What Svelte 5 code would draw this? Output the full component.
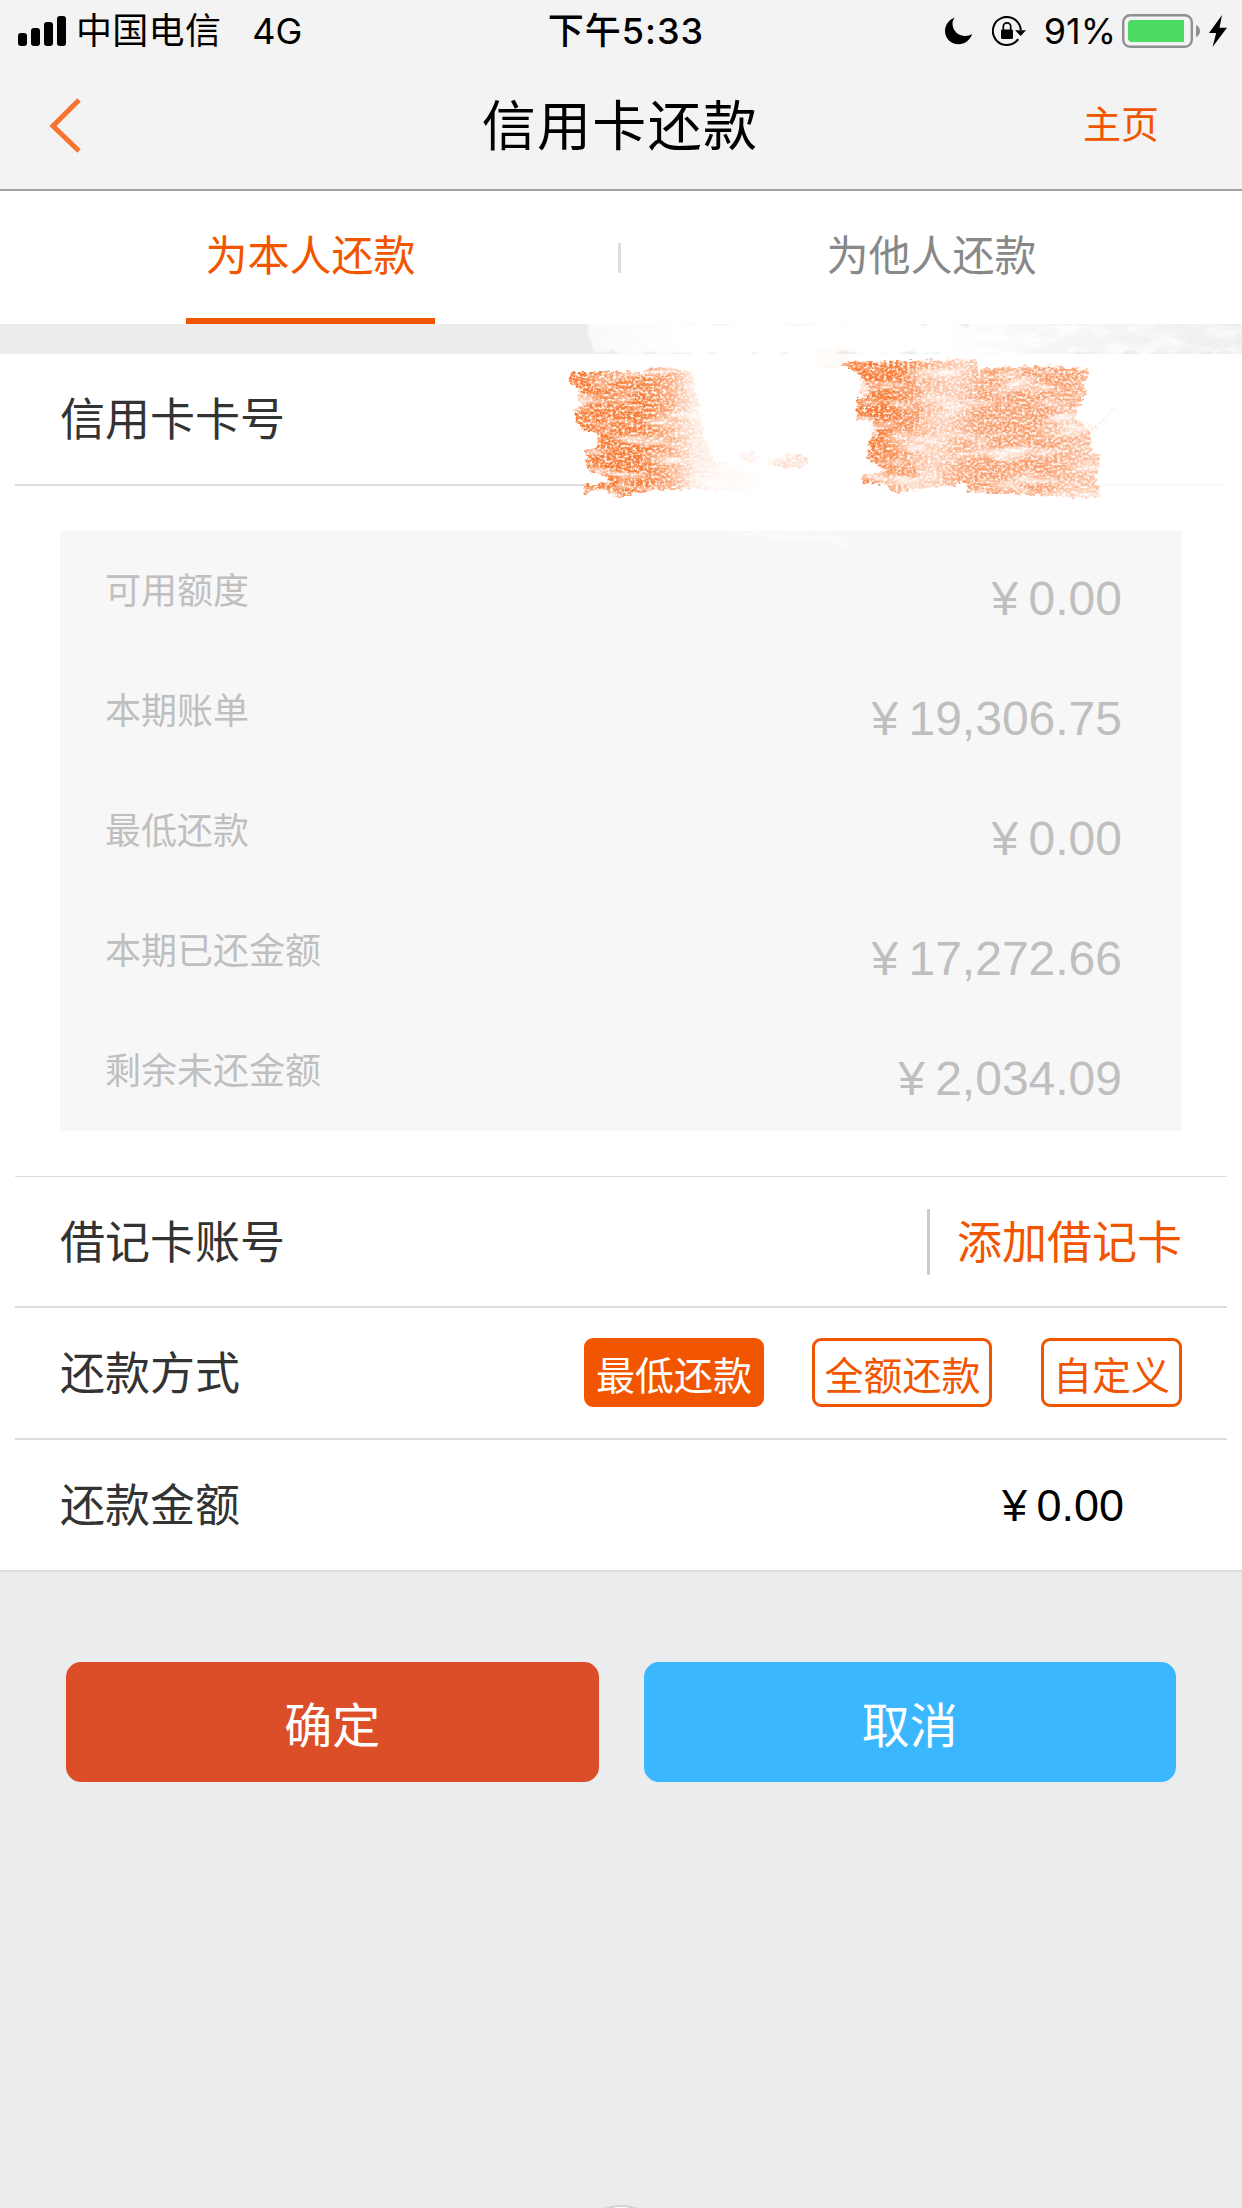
<script lang="ts">
  type Bill = { label: string; amount: string };

  const bills: Array<Bill> = [
    { label: '可用额度', amount: '0.00' },
    { label: '本期账单', amount: '19,306.75' },
    { label: '最低还款', amount: '0.00' },
    { label: '本期已还金额', amount: '17,272.66' },
    { label: '剩余未还金额', amount: '2,034.09' }
  ];

  const tabs = ['为本人还款', '为他人还款'];
  const modes = ['最低还款', '全额还款', '自定义'];

  let activeTab = $state(0);
  let activeMode = $state(0);
</script>

<main class="screen">
  <header class="top">
    <div class="status">
      <div class="status-left">
        <svg class="signal" width="48" height="30" viewBox="0 0 48 30">
          <rect x="0" y="17" width="9" height="13" rx="3" />
          <rect x="13" y="12" width="9" height="18" rx="3" />
          <rect x="26" y="6" width="9" height="24" rx="3" />
          <rect x="39" y="0" width="9" height="30" rx="3" />
        </svg>
        <span class="carrier">中国电信</span>
        <span class="network">4G</span>
      </div>
      <div class="time">下午5:33</div>
      <div class="status-right">
        <svg class="moon" width="28" height="28" viewBox="0 0 28 28">
          <path d="M10 .5C4 2.500 0 8 0 14c0 7.500 6 13.300 13.500 13.300 6 0 11.500-3.800 13.700-10.300-2 1.300-4.300 2-6.700 2C13 19 7.500 13.500 7.500 6.500 7.500 4.300 8.500 2 10 .5z" />
        </svg>
        <svg class="lock" width="34" height="30" viewBox="0 0 34 30">
          <path d="M26.200 23.200A14 14 0 1 1 28.800 14" fill="none" stroke="#000" stroke-width="2" />
          <path d="M23 14.300h11L28.700 20z" />
          <rect x="9" y="13.500" width="12" height="9.500" rx="1.200" />
          <path d="M11.300 14v-3.500a3.700 3.700 0 0 1 7.400 0V14" fill="none" stroke="#000" stroke-width="1.700" />
        </svg>
        <span class="percent">91%</span>
        <svg class="battery" width="78" height="34" viewBox="0 0 78 34">
          <rect x="1.200" y="1.200" width="68.600" height="31.600" rx="7" fill="none" stroke="#8f8f8f" stroke-width="2.400" />
          <path d="M10 6h52v22H10a4 4 0 0 1-4-4V10a4 4 0 0 1 4-4z" fill="#4cd964" />
          <path d="M74 11q4 2 4 6t-4 6z" fill="#8f8f8f" />
        </svg>
        <svg class="bolt" width="18" height="32" viewBox="0 0 18 32">
          <path d="M13 0 0 18h7.200L3.500 32 18 12.800h-7.500z" />
        </svg>
      </div>
    </div>
    <nav class="navbar">
      <svg class="back" width="34" height="56" viewBox="0 0 34 56">
        <path d="M31 2 5 28l26 25" fill="none" stroke="#f8742e" stroke-width="5" />
      </svg>
      <h1>信用卡还款</h1>
      <a class="home" href="#home">主页</a>
    </nav>
  </header>

  <div class="tabs">
    {#each tabs as tab, i}
      <button class="tab" class:active={activeTab === i} onclick={() => (activeTab = i)}>
        <span>{tab}</span>
      </button>
    {/each}
  </div>

  <section class="card">
    <div class="row">
      <span class="label">信用卡卡号</span>
      <!-- crayon scribble over the card number -->
      <svg class="scribble" width="702" height="250" viewBox="0 0 702 250">
        <defs>
          <filter id="crayon" x="-10%" y="-10%" width="120%" height="120%" color-interpolation-filters="sRGB">
            <feTurbulence type="fractalNoise" baseFrequency="0.16 0.22" numOctaves="2" seed="4" result="rough" />
            <feDisplacementMap in="SourceGraphic" in2="rough" scale="9" xChannelSelector="R" yChannelSelector="G" result="edge" />
            <feTurbulence type="fractalNoise" baseFrequency="0.34 0.36" numOctaves="3" seed="11" result="grain" />
            <feColorMatrix in="grain" type="matrix" values="0 0 0 0 1  0 0 0 0 1  0 0 0 0 1  2.800 0 0 0 -0.650" result="fine" />
            <feTurbulence type="fractalNoise" baseFrequency="0.02 0.07" numOctaves="3" seed="21" result="patch" />
            <feColorMatrix in="patch" type="matrix" values="0 0 0 0 1  0 0 0 0 1  0 0 0 0 1  2.600 0 0 0 -0.350" result="coarse" />
            <feComposite in="edge" in2="fine" operator="in" result="grained" />
            <feComposite in="grained" in2="coarse" operator="in" />
            <feGaussianBlur stdDeviation="0.35" />
          </filter>
          <filter id="smudge" x="-5%" y="-20%" width="110%" height="140%" color-interpolation-filters="sRGB">
            <feTurbulence type="fractalNoise" baseFrequency="0.05 0.1" numOctaves="3" seed="7" result="rough" />
            <feDisplacementMap in="SourceGraphic" in2="rough" scale="14" xChannelSelector="R" yChannelSelector="G" />
            <feGaussianBlur stdDeviation="1" />
          </filter>
          <filter id="cloud" x="0" y="0" width="100%" height="100%" color-interpolation-filters="sRGB">
            <feTurbulence type="fractalNoise" baseFrequency="0.03 0.08" numOctaves="4" seed="3" result="n" />
            <feColorMatrix in="n" type="matrix" values="0 0 0 0 1  0 0 0 0 1  0 0 0 0 1  3 0 0 0 -0.900" result="mask" />
            <feComposite in="SourceGraphic" in2="mask" operator="in" />
          </filter>
          <linearGradient id="fadeA">
            <stop offset="0" stop-color="#f87c36" />
            <stop offset="0.38" stop-color="#f87c36" />
            <stop offset="0.52" stop-color="#f98a4c" stop-opacity="0.7" />
            <stop offset="0.64" stop-color="#faa070" stop-opacity="0.25" />
            <stop offset="0.8" stop-color="#faa070" stop-opacity="0.08" />
            <stop offset="1" stop-color="#faa070" stop-opacity="0" />
          </linearGradient>
          <linearGradient id="fadeB" x1="0" y1="0" x2="1" y2="0.15">
            <stop offset="0" stop-color="#f87c36" />
            <stop offset="0.2" stop-color="#f87c36" />
            <stop offset="0.34" stop-color="#f98a4c" stop-opacity="0.7" />
            <stop offset="0.46" stop-color="#faa070" stop-opacity="0.5" />
            <stop offset="0.58" stop-color="#f98f56" stop-opacity="0.85" />
            <stop offset="0.88" stop-color="#f98f56" stop-opacity="0.85" />
            <stop offset="1" stop-color="#faa070" stop-opacity="0.7" />
          </linearGradient>
          <linearGradient id="band">
            <stop offset="0" stop-color="#fff" stop-opacity="0.7" />
            <stop offset="0.15" stop-color="#fff" />
            <stop offset="0.6" stop-color="#fff" />
            <stop offset="0.9" stop-color="#fff" stop-opacity="0.8" />
            <stop offset="1" stop-color="#fff" stop-opacity="0.6" />
          </linearGradient>
          <linearGradient id="mist">
            <stop offset="0" stop-color="#e6e7ea" stop-opacity="0" />
            <stop offset="0.3" stop-color="#e6e7ea" stop-opacity="0.35" />
            <stop offset="1" stop-color="#e6e7ea" stop-opacity="0.6" />
          </linearGradient>
        </defs>
        <path d="M46 12h670v32H54z" fill="url(#band)" filter="url(#smudge)" />
        <path d="M400 14h302v30H400z" fill="url(#mist)" filter="url(#cloud)" />
        <path d="M44 168h500v12H44z" fill="#fff" />
        <path d="M544 168h146v12H544z" fill="#fff" opacity="0.8" />
        <path d="M184 222l122 5 4 8-74-6z" fill="#fff" opacity="0.5" filter="url(#smudge)" />
        <g transform="translate(0 5) scale(1 0.92)">
          <path
            d="M31 62h72l10-6 38 4 8 40 6 36 10 24 52 16-10 16-60-3-50 2-30 8-12-9-22 4 1-8 26-5-12-9-12-3 0-22 12-4-2-14-14-3-8-14 0-10 10-2-6-8 1-13-10-6z"
            fill="url(#fadeA)"
            filter="url(#crayon)"
          />
          <path
            d="M301 51l135-2 2 9 76-3 36 6-8 12 6 12-10 14-2 14 14 12 2 26 8 0-1 20-5 4 6 16-2 8-131-7v-8l-74 8-10-9-22 0 2-8 24-6-20-12 2-23 10-3-6-16-17-2 1-22 12-3-4-18-12-8z"
            fill="url(#fadeB)"
            filter="url(#crayon)"
          />
          <path d="M322 56l56 2 4 46-16 46 14 26-32 4-10-14 6-20-12-14 4-30-16-20z" fill="#f87c36" opacity="0.4" filter="url(#crayon)" />
        </g>
        <ellipse cx="248" cy="151" rx="20" ry="7" fill="#faa070" opacity="0.35" filter="url(#crayon)" />
        <ellipse cx="209" cy="147" rx="9" ry="5" fill="#faa070" opacity="0.22" filter="url(#crayon)" />
        <path d="M272 38h36v20h-28z" fill="#faa070" opacity="0.08" filter="url(#crayon)" />
        <path d="M545 112l9 8 22-24" fill="none" stroke="#faa070" stroke-width="2" opacity="0.2" filter="url(#crayon)" />
      </svg>
    </div>

    <div class="bills">
      {#each bills as bill}
        <div class="bill">
          <span class="bill-label">{bill.label}</span>
          <span class="bill-amount">¥ {bill.amount}</span>
        </div>
      {/each}
    </div>

    <div class="row first">
      <span class="label">借记卡账号</span>
      <a class="add" href="#add">添加借记卡</a>
    </div>
    <div class="row">
      <span class="label">还款方式</span>
      <div class="modes">
        {#each modes as mode, i}
          <button class="mode" class:picked={activeMode === i} onclick={() => (activeMode = i)}>{mode}</button>
        {/each}
      </div>
    </div>
    <div class="row last">
      <span class="label">还款金额</span>
      <span class="amount">¥ 0.00</span>
    </div>
  </section>

  <div class="actions">
    <button class="confirm">确定</button>
    <button class="cancel">取消</button>
  </div>

  <div class="assist"></div>
</main>

<style>
  :global(body) {
    margin: 0;
    background: #ebecee;
  }

  .screen {
    position: relative;
    width: 1242px;
    height: 2208px;
    overflow: hidden;
    background: #ebecee;
    font-family: 'Liberation Sans', 'Noto Sans CJK SC', sans-serif;
    color: #000;
  }

  button {
    margin: 0;
    padding: 0;
    border: 0;
    background: none;
    font-family: inherit;
  }

  a {
    text-decoration: none;
  }

  svg {
    display: block;
    flex: none;
  }

  .top {
    box-sizing: border-box;
    height: 191px;
    background: #f3f3f3;
    border-bottom: 2px solid #a0a0a0;
  }

  .status {
    display: grid;
    grid-template-columns: 1fr auto 1fr;
    align-items: center;
    height: 60px;
    padding: 0 15px 0 18px;
    font-family: 'Inter', 'Noto Sans CJK SC', sans-serif;
    font-size: 36px;
    line-height: 62px;
  }

  .status-left,
  .status-right {
    display: flex;
    align-items: center;
  }

  .status-right {
    justify-content: flex-end;
  }

  .carrier {
    margin-left: 10px;
    letter-spacing: 0.3px;
  }

  .network {
    margin-left: 31px;
  }

  .time {
    padding-left: 7px;
    font-weight: 500;
    letter-spacing: 1px;
  }

  .moon {
    margin-right: 19px;
  }

  .lock {
    margin-right: 18px;
  }

  .battery {
    margin: 0 9px 0 6px;
  }

  .navbar {
    display: grid;
    grid-template-columns: 1fr auto 1fr;
    align-items: center;
    height: 131px;
    padding: 0 83px 0 48px;
  }

  h1 {
    margin: 0 0 0 33px;
    padding-top: 2px;
    font-size: 54px;
    font-weight: 400;
    letter-spacing: 1.3px;
    line-height: 80px;
  }

  .home {
    justify-self: end;
    padding-bottom: 8px;
    font-size: 38px;
    color: #f25500;
  }

  .tabs {
    display: grid;
    grid-template-columns: 1fr 1fr;
    height: 133px;
    background: #fff;
  }

  .tab {
    position: relative;
    display: flex;
    justify-content: center;
    font-size: 42px;
    line-height: 132px;
    color: #888;
  }

  .tab span {
    box-sizing: border-box;
    width: 249px;
    height: 133px;
  }

  .tab.active {
    color: #f25500;
  }

  .tab.active span {
    border-bottom: 6px solid #f25500;
  }

  .tab:first-child::after {
    content: '';
    position: absolute;
    right: 0;
    top: 52px;
    width: 3px;
    height: 30px;
    background: #dcdcdc;
  }

  .card {
    margin-top: 30px;
    background: #fff;
    border-bottom: 2px solid #dcdcdd;
  }

  .row {
    position: relative;
    box-sizing: border-box;
    display: flex;
    align-items: center;
    justify-content: space-between;
    height: 132px;
    margin: 0 15px;
    padding: 0 45px;
    border-bottom: 2px solid #dededf;
  }

  .row.first {
    border-top: 1px solid #dededf;
  }

  .row.last {
    height: 130px;
    border-bottom: 0;
  }

  .label {
    padding-top: 4px;
    font-size: 45px;
    line-height: 64px;
    color: #333;
  }

  .scribble {
    position: absolute;
    left: 525px;
    top: -44px;
    pointer-events: none;
  }

  .bills {
    margin: 45px 60px;
    background: #f7f7f7;
  }

  .bill {
    display: flex;
    justify-content: space-between;
    height: 120px;
    padding: 0 60px 0 45px;
    color: #bfbfbf;
  }

  .bill-label {
    font-size: 36px;
    line-height: 122px;
  }

  .bill-amount {
    font-size: 48px;
    line-height: 136px;
    word-spacing: -3px;
  }

  .add {
    box-sizing: border-box;
    height: 66px;
    padding: 2px 0 0 27px;
    border-left: 3px solid #ccc;
    font-size: 45px;
    line-height: 66px;
    color: #f25500;
  }

  .modes {
    display: flex;
    gap: 48.500px;
    margin-bottom: 2px;
  }

  .mode {
    box-sizing: border-box;
    height: 69px;
    padding: 4px 9px 0;
    border: 3px solid #f25500;
    border-radius: 9px;
    font-size: 39px;
    line-height: 63px;
    color: #f25500;
  }

  .mode.picked {
    background: #f25500;
    color: #fff;
  }

  .amount {
    margin-right: 58px;
    padding-top: 2px;
    font-size: 45px;
    word-spacing: -3px;
  }

  .actions {
    display: grid;
    grid-template-columns: 1fr 1fr;
    gap: 45px;
    padding: 90px 66px 0;
  }

  .actions button {
    height: 120px;
    padding-top: 10px;
    border-radius: 15px;
    font-size: 48px;
    line-height: 110px;
    color: #fff;
  }

  .actions .confirm {
    background: #dc4e28;
  }

  .actions .cancel {
    background: #3bb7ff;
  }

  .assist {
    position: absolute;
    left: 576px;
    top: 2205px;
    width: 86px;
    height: 86px;
    border: 2px solid #cfd0d2;
    border-radius: 50%;
    background: #fff;
  }
</style>
